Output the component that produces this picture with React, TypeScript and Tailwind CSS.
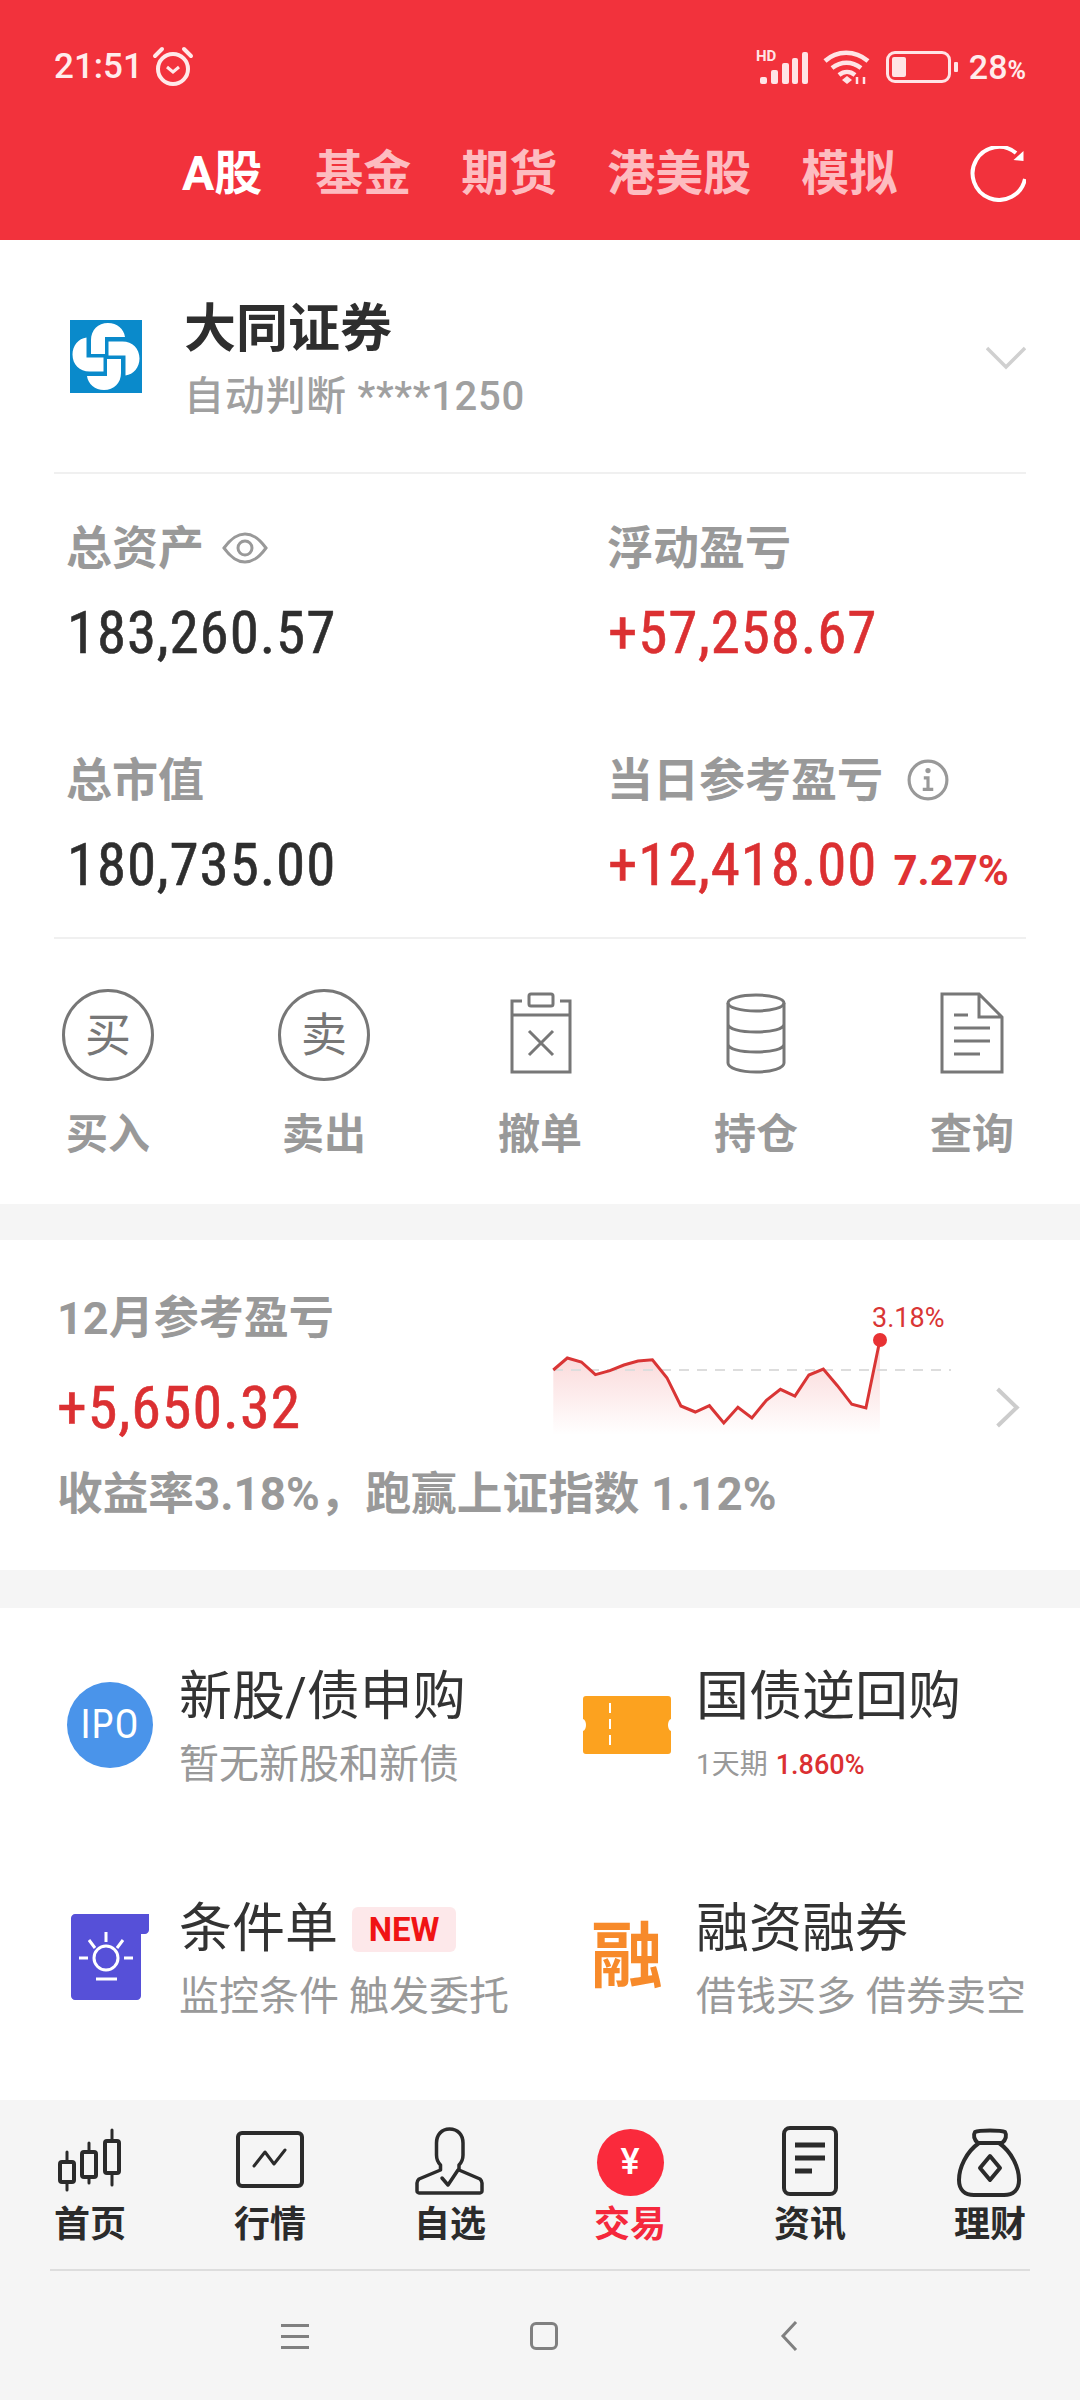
import React from 'react';

const CJK = '"Roboto","Noto Sans CJK SC",sans-serif';

const Tab = ({ label, active }: { label: string; active?: boolean }) => (
  <span className={`text-[48px] leading-none font-bold ${active ? 'text-white mr-[3px]' : 'text-[#fdbcc0]'}`}>{label}</span>
);

const Stat = ({ label, value, color, extra, icon }: { label: string; value: string; color: string; extra?: string; icon?: React.ReactNode }) => (
  <div className="h-[232px] flex flex-col">
    <div className="flex items-center h-[64px]">
      <span className="text-[46px] leading-none font-bold text-[#999999]">{label}</span>
      {icon}
    </div>
    <div className="flex items-baseline mt-[23px] ml-[1px]">
      <span className={`text-[59px] leading-none [font-stretch:85%] tracking-[0.9px] [-webkit-text-stroke:0.6px_currentColor] ${color}`}>{value}</span>
      {extra && <span className="ml-[16px] text-[42px] leading-none font-bold text-[#e03234]">{extra}</span>}
    </div>
  </div>
);

const ActionIcon = ({ kind }: { kind: string }) => {
  if (kind === 'buy' || kind === 'sell') {
    return (
      <div className="w-[92px] h-[92px] rounded-full border-[3px] border-[#777777] flex items-center justify-center text-[46px] leading-none text-[#777777]">
        {kind === 'buy' ? '买' : '卖'}
      </div>
    );
  }
  return (
    <svg width="92" height="92" viewBox="0 0 92 92" fill="none" stroke="#777777" strokeWidth="3">
      {kind === 'cancel' && (
        <>
          <path d="M28 12H18v71h58V12H66" />
          <rect x="35" y="5" width="24" height="12" rx="2" />
          <path d="M18 26h58M35 42l24 24M59 42L35 66" />
        </>
      )}
      {kind === 'hold' && (
        <>
          <ellipse cx="46" cy="14" rx="28" ry="8" />
          <path d="M18 14v60c0 5 12 9 28 9s28-4 28-9V14M18 35c0 5 12 8 28 8s28-3 28-8M18 55c0 5 12 8 28 8s28-3 28-8" />
        </>
      )}
      {kind === 'query' && (
        <>
          <path d="M16 5h37l23 23v55H16zM53 5l0 23h23" />
          <path d="M28 26h14M28 39h36M28 52h36M28 65h26" />
        </>
      )}
    </svg>
  );
};

const Action = ({ kind, label }: { kind: string; label: string }) => (
  <div className="w-[216px] flex flex-col items-center">
    <ActionIcon kind={kind} />
    <span className="mt-[33px] text-[42px] leading-none font-bold text-[#999999]">{label}</span>
  </div>
);

const Service = ({ icon, title, badge, sub }: { icon: React.ReactNode; title: string; badge?: boolean; sub: React.ReactNode }) => (
  <div className="flex h-[232px]">
    <div className="w-[138px] flex items-center justify-center shrink-0 h-[126px]">{icon}</div>
    <div className="flex flex-col">
      <div className="flex items-center h-[70px]">
        <span className="text-[53px] leading-none text-[#333333]">{title}</span>
        {badge && (
          <span className="ml-[14px] w-[104px] h-[45px] rounded-[6px] bg-[#fde8ea] text-[#f01414] text-[33px] leading-none font-bold flex items-center justify-center">NEW</span>
        )}
      </div>
      <div className="mt-[11px] h-[44px] flex items-center text-[40px] leading-none text-[#999999]">{sub}</div>
    </div>
  </div>
);

const NavIcon = ({ kind }: { kind: string }) => (
  <svg width="80" height="72" viewBox="0 0 80 72" fill="none" stroke="#2b2b2b" strokeWidth="4" strokeLinejoin="round" strokeLinecap="round">
    {kind === 'home' && (
      <>
        <path d="M17 26v38M39 17v40M62 4v55" strokeWidth="3" />
        <rect x="10" y="36" width="14" height="20" rx="2" fill="#f5f5f5" />
        <rect x="32" y="26" width="14" height="25" rx="2" fill="#f5f5f5" />
        <rect x="55" y="15" width="14" height="32" rx="2" fill="#f5f5f5" />
      </>
    )}
    {kind === 'market' && (
      <>
        <rect x="8" y="7" width="64" height="53" rx="4" />
        <path d="M24 40l11-14 9 12 11-14" strokeWidth="3" />
      </>
    )}
    {kind === 'watch' && (
      <>
        <path d="M39.5 3c-8 0-13 6-13 14v12c0 4 2 8 4 10v5L9 53c-1 1-2 2-2 4v8c0 1 1 2 2 2h61c1 0 2-1 2-2v-8c0-2-1-3-2-4L49 44v-5c2-2 4-6 4-10V17c0-8-5-14-13.5-14z" strokeWidth="3.5" />
        <path d="M32 52l6 7 10-15" strokeWidth="3.5" />
      </>
    )}
    {kind === 'news' && (
      <>
        <rect x="14" y="2" width="52" height="66" rx="6" />
        <path d="M25 19h30M25 32h30M25 45h17" strokeLinecap="butt" strokeWidth="5" />
      </>
    )}
    {kind === 'money' && (
      <>
        <path d="M29 17C16 26 9 42 9 54c0 10 6 15 15 15h30c9 0 15-5 15-15C69 42 62 26 49 17" />
        <path d="M28 17c-4-3-5-8-3-11 4-2 26-2 30 0 2 3 1 8-3 11z" />
        <path d="M40 30l10 12-10 12-10-12z" />
      </>
    )}
  </svg>
);

const NavItem = ({ kind, label, active }: { kind: string; label: string; active?: boolean }) => (
  <div className="w-[180px] flex flex-col items-center">
    {active ? (
      <div className="h-[72px] flex items-center justify-center">
        <div className="w-[67px] h-[67px] rounded-full bg-[#fa2a3c] flex items-center justify-center text-white text-[36px] leading-none font-medium">¥</div>
      </div>
    ) : (
      <NavIcon kind={kind} />
    )}
    <span className={`mt-[9px] text-[36px] leading-none font-bold ${active ? 'text-[#f5283c]' : 'text-[#2b2b2b]'}`}>{label}</span>
  </div>
);

const pts = '53.3,100 67.3,88 81.4,92 95.4,104.7 109.9,100.7 123.9,95 138,91 152.4,89.7 166.9,107.7 180.9,136 195.3,142 209.4,135.7 223.8,153 237.9,137.3 251.9,148 266.4,130.3 280.4,119.3 294.9,126 308.9,105 323.3,99 337.4,115.7 351.8,134.3 365.9,138 379.9,70';

export default function App() {
  return (
    <div className="w-[1080px] h-[2400px] bg-[#f5f5f5] flex flex-col overflow-hidden" style={{ fontFamily: CJK }}>
      {/* status bar + tabs */}
      <div className="h-[240px] bg-[#f2323c] flex flex-col shrink-0">
        <div className="h-[146px] px-[54px] flex items-start pt-[46px] text-white">
          <span className="text-[35px] leading-[42px] font-medium text-[#ffecec]">21:51</span>
          <svg className="ml-[8px]" width="44" height="42" viewBox="0 0 44 42" fill="none" stroke="#ffe9e9" strokeWidth="4">
            <circle cx="22" cy="23" r="15" />
            <path d="M16 21l6 5 6-5" strokeWidth="3" />
            <path d="M4 10l7-7M40 10l-7-7" strokeLinecap="round" />
          </svg>
          <div className="ml-auto flex items-center h-[42px]">
            <svg width="52" height="42" viewBox="0 -3 52 42">
              <text x="0" y="12" fontSize="15" fontWeight="700" fill="#ffe4e6">HD</text>
              <g fill="#ffe4e6">
                <rect x="4" y="28" width="7" height="7" rx="2" />
                <rect x="15" y="21" width="7" height="14" rx="2" />
                <rect x="26" y="14" width="7" height="21" rx="2" />
                <rect x="36" y="9" width="6" height="26" rx="2" />
                <rect x="46" y="3" width="6" height="32" rx="2" />
              </g>
            </svg>
            <svg className="ml-[15px]" width="48" height="36" viewBox="0 0 48 36" fill="none" stroke="#ffe4e6" strokeWidth="4.5">
              <path d="M2 12C14 1 32 1 45 12M9 19c9-7 20-7 29 0M16 26c5-4 11-4 16 0" />
              <path d="M19 31l5-4 5 4-5 4z" fill="#ffe4e6" stroke="none" />
              <path d="M34 28v7M41 28v7" strokeWidth="2.5" />
            </svg>
            <div className="ml-[15px] w-[65px] h-[32px] rounded-[9px] border-[3px] border-[#ffe4e6] p-[3px] flex">
              <div className="w-[14px] bg-[#ffe4e6] rounded-[2px]" />
            </div>
            <div className="ml-[3px] w-[4px] h-[10px] bg-[#ffe4e6] rounded-[1px]" />
            <span className="ml-[11px] text-[34px] leading-none font-medium text-[#ffecec]">28</span>
            <span className="text-[25px] leading-none font-bold text-[#ffecec] mt-[6px]">%</span>
          </div>
        </div>
        <div className="flex items-center pl-[182px] pr-[54px]">
          <div className="flex items-center gap-[50px]">
            <Tab label="A股" active />
            <Tab label="基金" />
            <Tab label="期货" />
            <Tab label="港美股" />
            <Tab label="模拟" />
          </div>
          <svg className="ml-auto" width="56" height="56" viewBox="0 0 56 56" fill="none" stroke="#ffffff" strokeWidth="4">
            <path d="M55 33A26.5 26.5 0 1 1 46 7" />
            <path d="M53.5 5v10l-10-1z" fill="#ffffff" stroke="none" />
          </svg>
        </div>
      </div>

      {/* account card */}
      <div className="bg-white h-[964px] shrink-0 flex flex-col">
        <div className="mx-[54px] h-[234px] border-b-2 border-[#f0f0f0] flex items-center">
          <svg className="ml-[16px] shrink-0" width="72" height="73" viewBox="0 0 72 73">
            <rect width="72" height="73" fill="#0a8acb" />
            <g fill="#ffffff">
              <path d="M21 34V20C21 10 28 3 38 3C47 3 54 9 55 17H35V34Z" />
              <path d="M21 34V20C21 10 28 3 38 3C47 3 54 9 55 17H35V34Z" transform="rotate(90 36 36.5)" />
              <path d="M21 34V20C21 10 28 3 38 3C47 3 54 9 55 17H35V34Z" transform="rotate(180 36 36.5)" />
              <path d="M21 34V20C21 10 28 3 38 3C47 3 54 9 55 17H35V34Z" transform="rotate(270 36 36.5)" />
            </g>
          </svg>
          <div className="ml-[42px] mt-[9px] flex flex-col">
            <span className="text-[52px] leading-none font-bold text-[#2e2e2e]">大同证券</span>
            <span className="mt-[21px] text-[40px] leading-none font-medium text-[#a0a0a0] tracking-[0.7px]">自动判断 ****1250</span>
          </div>
          <svg className="ml-auto mt-[4px]" width="40" height="24" viewBox="0 0 40 24" fill="none" stroke="#d0d0d0" strokeWidth="3.5">
            <path d="M1 2l19 19L39 2" />
          </svg>
        </div>

        <div className="mx-[54px] h-[465px] border-b-2 border-[#f0f0f0] pl-[12px] pt-[42px] grid grid-cols-[541px_1fr]">
          <Stat
            label="总资产"
            value="183,260.57"
            color="text-[#2e2e2e]"
            icon={
              <svg className="ml-[18px]" width="46" height="34" viewBox="0 0 46 34" fill="none" stroke="#999999" strokeWidth="3">
                <path d="M2 17C10 6 16 3 23 3s13 3 21 14c-8 11-14 14-21 14S10 28 2 17z" />
                <circle cx="23" cy="17" r="7" />
              </svg>
            }
          />
          <Stat label="浮动盈亏" value="+57,258.67" color="text-[#db3032]" />
          <Stat label="总市值" value="180,735.00" color="text-[#2e2e2e]" />
          <Stat
            label="当日参考盈亏"
            value="+12,418.00"
            color="text-[#db3032]"
            extra="7.27%"
            icon={
              <svg className="ml-[24px]" width="42" height="42" viewBox="0 0 40 40" fill="none" stroke="#999999" strokeWidth="3">
                <circle cx="20" cy="20" r="18" />
                <path d="M16 18h4v11M15 29h10" strokeWidth="3" />
                <circle cx="20" cy="11" r="2.5" fill="#999999" stroke="none" />
              </svg>
            }
          />
        </div>

        <div className="flex pt-[50px]">
          <Action kind="buy" label="买入" />
          <Action kind="sell" label="卖出" />
          <Action kind="cancel" label="撤单" />
          <Action kind="hold" label="持仓" />
          <Action kind="query" label="查询" />
        </div>
      </div>

      {/* monthly profit */}
      <div className="mt-[36px] bg-white h-[330px] shrink-0 pl-[57px] flex flex-col">
        <div className="flex h-[230px]">
          <div className="w-[443px] flex flex-col pt-[56px] shrink-0">
            <span className="text-[45px] leading-none font-bold text-[#999999]">12月参考盈亏</span>
            <span className="mt-[37px] text-[60px] leading-none [font-stretch:85%] tracking-[1px] [-webkit-text-stroke:0.6px_currentColor] text-[#db3032]">+5,650.32</span>
          </div>
          <svg width="580" height="200" viewBox="0 0 580 200" className="shrink-0 mt-[30px]">
            <defs>
              <linearGradient id="fade" x1="0" y1="0" x2="0" y2="1">
                <stop offset="0" stopColor="#e83234" stopOpacity="0.22" />
                <stop offset="1" stopColor="#e83234" stopOpacity="0" />
              </linearGradient>
            </defs>
            <path d={`M53.3,165 L${pts} L379.9,165 Z`} fill="url(#fade)" />
            <path d="M53 100H451" stroke="#dddddd" strokeWidth="2" strokeDasharray="10 8" />
            <polyline points={pts} fill="none" stroke="#d93535" strokeWidth="3" />
            <circle cx="380" cy="70" r="7" fill="#e83234" />
            <text x="372" y="57" fontSize="27" fill="#d93535">3.18%</text>
            <path d="M497.6 119L516.8 137.5L497.6 156" fill="none" stroke="#cccccc" strokeWidth="4" />
          </svg>
        </div>
        <span className="mt-[2px] text-[45.7px] leading-none font-bold text-[#999999]">收益率3.18%，跑赢上证指数 1.12%</span>
      </div>

      {/* services */}
      <div className="mt-[38px] bg-white h-[492px] shrink-0 pt-[54px] pl-[41px] grid grid-cols-[517px_1fr]">
        <Service
          icon={
            <div className="w-[86px] h-[86px] rounded-full bg-[#4a94ea] flex items-center justify-center text-white text-[40px] leading-none [font-stretch:85%] tracking-[1px]">IPO</div>
          }
          title="新股/债申购"
          sub="暂无新股和新债"
        />
        <Service
          icon={
            <svg width="88" height="58" viewBox="0 0 88 58">
              <path d="M3 0h82a3 3 0 0 1 3 3v20c-4 1-4 11 0 12v20a3 3 0 0 1-3 3H3a3 3 0 0 1-3-3V35c4-1 4-11 0-12V3a3 3 0 0 1 3-3z" fill="#fca21f" />
              <path d="M27 7v44" stroke="#ffffff" strokeWidth="2" strokeDasharray="10 6" />
            </svg>
          }
          title="国债逆回购"
          sub={
            <span className="flex items-center text-[28px]">
              <span>1天期</span>
              <span className="ml-[8px] text-[27px] text-[#db3032] font-medium">1.860%</span>
            </span>
          }
        />
        <Service
          icon={
            <svg width="78" height="86" viewBox="0 0 78 86">
              <path d="M4 0h74v16c0 2-2 4-4 4h-4v62c0 2-2 4-4 4H4c-2 0-4-2-4-4V4c0-2 2-4 4-4z" fill="#5650d8" />
              <g fill="none" stroke="#ffffff" strokeWidth="3">
                <circle cx="35" cy="44" r="12" />
                <path d="M35 18v10M18 26l6 8M52 26l-6 8M8 44h9M53 44h9M25 65h21" />
              </g>
            </svg>
          }
          title="条件单"
          badge
          sub="监控条件 触发委托"
        />
        <Service
          icon={<span className="text-[72px] leading-none font-bold text-[#f78a2a]">融</span>}
          title="融资融券"
          sub="借钱买多 借券卖空"
        />
      </div>

      {/* bottom nav */}
      <div className="flex-1 bg-[#f5f5f5] flex flex-col">
        <div className="flex pt-[26px]">
          <NavItem kind="home" label="首页" />
          <NavItem kind="market" label="行情" />
          <NavItem kind="watch" label="自选" />
          <NavItem kind="trade" label="交易" active />
          <NavItem kind="news" label="资讯" />
          <NavItem kind="money" label="理财" />
        </div>
        <div className="mx-[50px] mt-[26px] border-t-2 border-[#dddddd]" />
        <div className="flex items-center justify-between px-[281px] h-[130px]">
          <div className="w-[28px] flex flex-col gap-[8px]">
            <div className="h-[3px] bg-[#808080]" />
            <div className="h-[3px] bg-[#808080]" />
            <div className="h-[3px] bg-[#808080]" />
          </div>
          <div className="w-[28px] h-[28px] rounded-[6px] border-[3px] border-[#808080]" />
          <svg width="20" height="30" viewBox="0 0 20 30" fill="none" stroke="#808080" strokeWidth="3">
            <path d="M17 1L4 15l13 14" />
          </svg>
        </div>
      </div>
    </div>
  );
}
